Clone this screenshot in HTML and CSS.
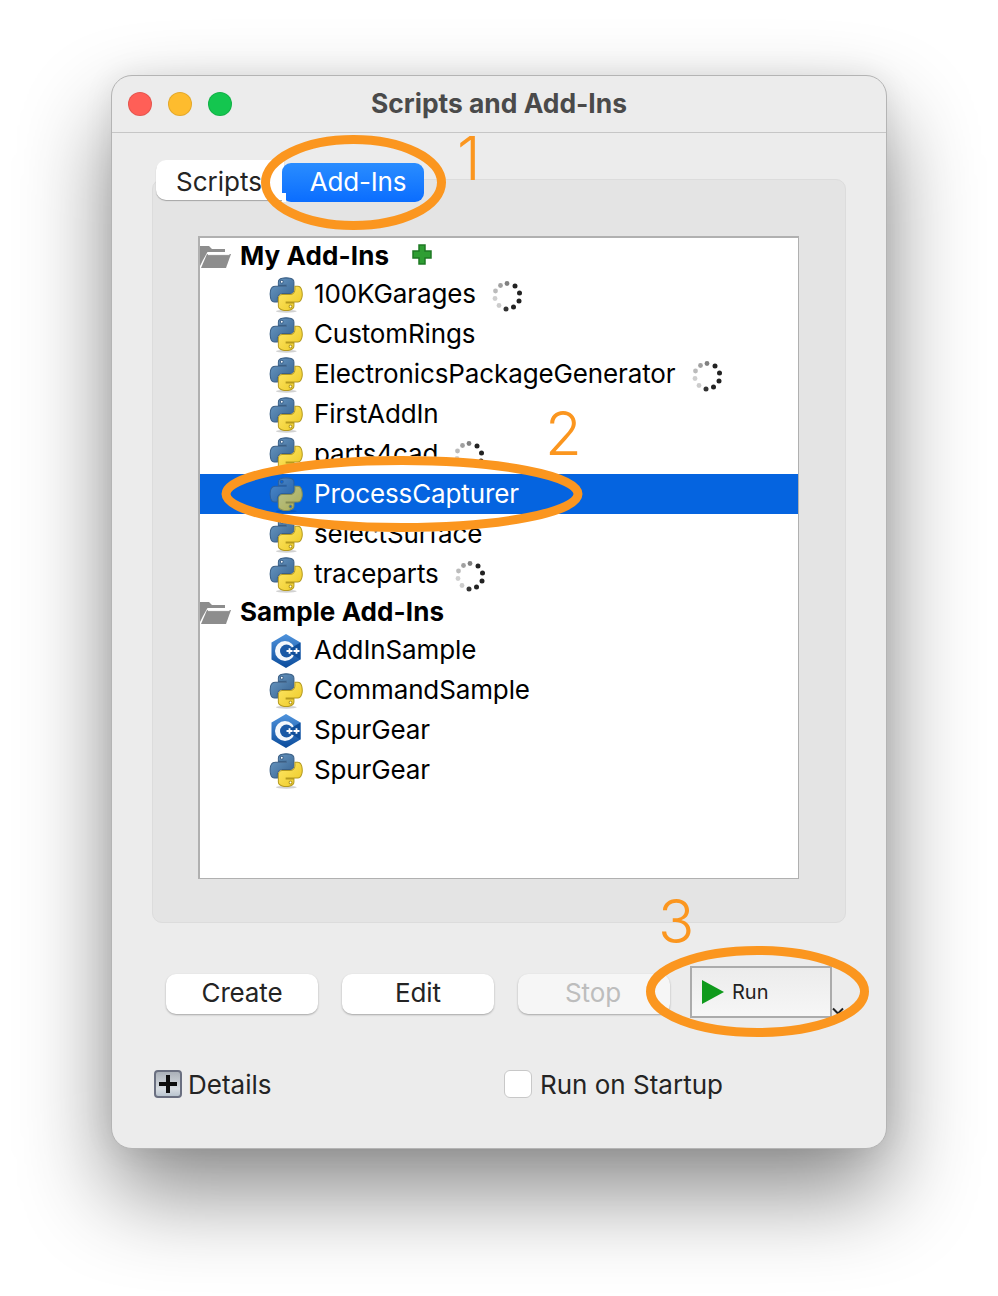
FILE: index.html
```html
<!DOCTYPE html>
<html lang="en">
<head>
<meta charset="utf-8">
<title>Scripts and Add-Ins</title>
<link rel="stylesheet" href="styles.css">
</head>
<body>
<svg class="defs" width="0" height="0" aria-hidden="true">
  <defs>
    <linearGradient id="pyBlue" x1="0" y1="0" x2="1" y2="1"><stop offset="0" stop-color="#6d9cc6"/><stop offset="1" stop-color="#35618f"/></linearGradient>
    <linearGradient id="pyYellow" x1="0" y1="0" x2="1" y2="1"><stop offset="0" stop-color="#ffe86a"/><stop offset="1" stop-color="#ecc822"/></linearGradient>
    <linearGradient id="cppBlue" x1="0" y1="0" x2="0" y2="1"><stop offset="0" stop-color="#4f93dc"/><stop offset="1" stop-color="#0b4c9c"/></linearGradient>
    <symbol id="py" viewBox="-3 -3 116 124">
      <ellipse cx="56" cy="115" rx="36" ry="5" fill="#000" opacity=".18"/>
      <path fill="url(#pyBlue)" stroke="#3a5f86" stroke-width="3.500" d="M54.919 0c-4.584.022-8.961.413-12.813 1.095C30.76 3.099 28.7 7.295 28.7 15.032V25.25h26.812v3.406H18.638c-7.792 0-14.616 4.684-16.75 13.594-2.462 10.213-2.571 16.586 0 27.25 1.906 7.938 6.458 13.594 14.25 13.594h9.219v-12.25c0-8.85 7.657-16.656 16.75-16.656h26.781c7.455 0 13.406-6.138 13.406-13.625V15.032c0-7.266-6.13-12.725-13.406-13.937C64.282.328 59.502-.02 54.919 0zM40.419 8.22c2.77 0 5.031 2.299 5.031 5.125 0 2.816-2.262 5.094-5.031 5.094-2.78 0-5.031-2.278-5.031-5.094 0-2.826 2.252-5.125 5.031-5.125z"/>
      <path fill="url(#pyYellow)" stroke="#b59a1f" stroke-width="3.500" d="M85.638 28.657v11.906c0 9.231-7.826 17-16.75 17H42.106c-7.336 0-13.406 6.278-13.406 13.625v25.531c0 7.266 6.319 11.54 13.406 13.625 8.487 2.496 16.626 2.947 26.781 0 6.75-1.954 13.406-5.888 13.406-13.625V86.501H55.512v-3.406H95.7c7.792 0 10.696-5.435 13.406-13.594 2.799-8.399 2.68-16.476 0-27.25-1.926-7.757-5.604-13.594-13.406-13.594zM70.575 93.313c2.78 0 5.031 2.278 5.031 5.094 0 2.826-2.252 5.125-5.031 5.125-2.77 0-5.031-2.299-5.031-5.125 0-2.816 2.262-5.094 5.031-5.094z"/>
    </symbol>
    <symbol id="cpp" viewBox="-2 -1 34 36">
      <polygon points="15,0 29.500,8.500 29.500,25.500 15,34 0.500,25.500 0.500,8.500" fill="url(#cppBlue)"/>
      <circle cx="14" cy="17" r="10" fill="#f4f8fc"/>
      <circle cx="15.500" cy="17" r="6.500" fill="#1b5aa6"/>
      <polygon points="15,17 29.500,8.500 29.500,25.500" fill="#0f4f9c"/>
      <path d="M15.500 17h6M18.500 14.300v5.400M22.500 17h6M25.500 14.300v5.400" stroke="#fff" stroke-width="1.800" fill="none"/>
    </symbol>
    <symbol id="folder" viewBox="0 0 32 23">
      <path fill="#8d8d8d" d="M1 1h9l3 3h13v3H8.500L4 15 1 21z"/>
      <path fill="#8d8d8d" d="M8 9h24l-5 14H2z"/>
      <path fill="none" stroke="#fff" stroke-width="1" d="M8.800 9.600h21.700"/>
    </symbol>
    <symbol id="spin" viewBox="0 0 32 32">
      <circle cx="16" cy="3.500" r="2.400" fill="#555" opacity=".75"/>
      <circle cx="24" cy="6" r="2.500" fill="#222"/>
      <circle cx="28.500" cy="13" r="2.500" fill="#222"/>
      <circle cx="28" cy="21" r="2.500" fill="#222"/>
      <circle cx="22.500" cy="27" r="2.500" fill="#222"/>
      <circle cx="15" cy="29" r="2.500" fill="#333"/>
      <circle cx="8" cy="25.500" r="2.400" fill="#aaa" opacity=".6"/>
      <circle cx="4" cy="18.500" r="2.400" fill="#bbb" opacity=".7"/>
      <circle cx="4.500" cy="11" r="2.400" fill="#aaa" opacity=".8"/>
      <circle cx="9.500" cy="5.500" r="2.400" fill="#888" opacity=".8"/>
    </symbol>
  </defs>
</svg>

<main class="window">
  <header class="titlebar">
    <div class="lights">
      <span class="light light-red"></span>
      <span class="light light-yellow"></span>
      <span class="light light-green"></span>
    </div>
    <h1 class="title">Scripts and Add-Ins</h1>
    <div></div>
  </header>

  <div class="content">
    <div class="tabs">
      <div class="tab tab-plain">Scripts</div>
      <div class="tab tab-active">Add-Ins</div>
    </div>

    <section class="panel">
      <div class="tree">
        <div class="sel-halo"></div>
        <div class="group"><svg class="ic-folder"><use href="#folder"/></svg><span>My Add-Ins</span>
          <svg class="ic-add" viewBox="0 0 20 21"><path d="M7 1h6v6h6v7h-6v6H7v-6H1V7h6z" fill="#2f9e33" stroke="#1f7a25" stroke-width="1.500"/></svg>
        </div>
        <div class="row"><svg class="ic"><use href="#py"/></svg><span>100KGarages</span><svg class="spin"><use href="#spin"/></svg></div>
        <div class="row"><svg class="ic"><use href="#py"/></svg><span>CustomRings</span></div>
        <div class="row"><svg class="ic"><use href="#py"/></svg><span>ElectronicsPackageGenerator</span><svg class="spin"><use href="#spin"/></svg></div>
        <div class="row"><svg class="ic"><use href="#py"/></svg><span>FirstAddIn</span></div>
        <div class="row"><svg class="ic"><use href="#py"/></svg><span>parts4cad</span><svg class="spin"><use href="#spin"/></svg></div>
        <div class="row row-selected"><svg class="ic"><use href="#py"/></svg><span>ProcessCapturer</span></div>
        <div class="row"><svg class="ic"><use href="#py"/></svg><span>selectSurface</span></div>
        <div class="row"><svg class="ic"><use href="#py"/></svg><span>traceparts</span><svg class="spin"><use href="#spin"/></svg></div>
        <div class="group"><svg class="ic-folder"><use href="#folder"/></svg><span>Sample Add-Ins</span></div>
        <div class="row"><svg class="ic"><use href="#cpp"/></svg><span>AddInSample</span></div>
        <div class="row"><svg class="ic"><use href="#py"/></svg><span>CommandSample</span></div>
        <div class="row"><svg class="ic"><use href="#cpp"/></svg><span>SpurGear</span></div>
        <div class="row"><svg class="ic"><use href="#py"/></svg><span>SpurGear</span></div>
      </div>
    </section>

    <div class="actions">
      <button class="btn">Create</button>
      <button class="btn">Edit</button>
      <button class="btn btn-disabled">Stop</button>
      <button class="run"><svg class="run-ic" viewBox="0 0 24 26"><polygon points="1,1 23,13 1,25" fill="#0f9a1c"/></svg>Run</button>
      <svg class="chev" viewBox="0 0 12 8"><path d="M1 1.500l5 5 5-5" fill="none" stroke="#222" stroke-width="2"/></svg>
    </div>

    <div class="footer">
      <div class="details">
        <span class="plusbox"><svg viewBox="0 0 18 18" width="18" height="18"><path d="M7 0h4v7h7v4h-7v7H7v-7H0V7h7z" fill="#0d0d0d"/></svg></span>
        <span>Details</span>
      </div>
      <label class="startup"><span class="check"></span><span>Run on Startup</span></label>
    </div>
  </div>
</main>

<svg class="marks" viewBox="0 0 998 1296" aria-hidden="true">
  <ellipse cx="353.500" cy="182.500" rx="88" ry="43" />
  <ellipse cx="402" cy="494" rx="176" ry="33.500" />
  <ellipse cx="757.500" cy="991.500" rx="107" ry="41" />
</svg>
<div class="num num-1">1</div>
<div class="num num-2">2</div>
<div class="num num-3">3</div>
</body>
</html>
```
FILE: styles.css
```css
* { box-sizing: border-box; }
html, body { margin: 0; background: #fff; }
body {
  position: relative;
  width: 998px;
  height: 1296px;
  padding: 75px 0 0 111px;
  overflow: hidden;
  font-family: Inter, "Liberation Sans", sans-serif;
  font-size: 26px;
  color: #242424;
}
.defs { position: absolute; }

.window {
  width: 776px;
  height: 1074px;
  background: #ececec;
  border: 1px solid #b4b4b4;
  border-radius: 21px;
  box-shadow: 0 44px 90px rgba(0, 0, 0, .46), 0 0 30px rgba(0, 0, 0, .08);
  display: flex;
  flex-direction: column;
}
.titlebar {
  height: 57px;
  flex: none;
  border-bottom: 1px solid #c6c6c6;
  padding: 0 16px;
  display: grid;
  grid-template-columns: 1fr auto 1fr;
  align-items: center;
}
.lights { display: flex; gap: 16px; }
.light { width: 24px; height: 24px; border-radius: 50%; border: 1px solid rgba(0, 0, 0, .1); }
.light-red { background: #ff5f57; }
.light-yellow { background: #febc2e; }
.light-green { background: #14c64f; }
.title { margin: 0 0 2px; font-size: 26.4px; font-weight: 700; color: #4a4a4a; }

.content { padding: 27px 40px 0; display: flex; flex-direction: column; }

.tabs {
  position: relative;
  z-index: 1;
  height: 42px;
  margin: 0 0 -23px 4px;
  display: flex;
  align-items: flex-start;
}
.tab { display: flex; align-items: center; justify-content: center; }
.tab-plain {
  width: 128px;
  height: 40px;
  padding: 2px 2px 0 0;
  background: #fff;
  border-radius: 10px 0 0 10px;
  box-shadow: 0 1px 1px rgba(0, 0, 0, .28);
}
.tab-active {
  position: relative;
  width: 142px;
  height: 39px;
  margin: 3px 0 0 -2px;
  padding: 0 0 2px 10px;
  color: #fff;
  letter-spacing: -.2px;
  background: linear-gradient(#2a8dff, #0a6dff);
  border-radius: 9px;
}
.tab-active::after {
  content: "";
  position: absolute;
  left: 0;
  bottom: 0;
  width: 4px;
  height: 9px;
  background: #fff;
}

.panel {
  height: 744px;
  flex: none;
  padding: 56px 0 0 45px;
  background: #e4e4e4;
  border: 1px solid #dcdcdc;
  border-radius: 10px;
}
.tree {
  position: relative;
  width: 601px;
  height: 643px;
  background: #fff;
  border: 1px solid #b0b0b0;
  border-width: 2px 1px 1px 2px;
  color: #000;
}
.sel-halo {
  position: absolute;
  left: 21px;
  top: 218px;
  width: 362px;
  height: 76px;
  border-radius: 50%;
  background: #fff;
  z-index: 1;
}
.group {
  height: 36px;
  display: flex;
  align-items: center;
  font-weight: 700;
  letter-spacing: .1px;
}
.group > span { margin-bottom: 2px; }
.ic-folder { width: 32px; height: 23px; margin: 0 9px 0 -1px; flex: none; }
.ic-add { width: 20px; height: 21px; margin: -3px 0 0 23px; }
.row {
  height: 40px;
  display: flex;
  align-items: center;
  padding-left: 70px;
  letter-spacing: -.12px;
}
.row > span { margin-bottom: 2px; }
.row-selected {
  position: relative;
  z-index: 2;
  background: #0564e0;
  color: #fff;
}
.row-selected .ic { opacity: .72; }
.ic { width: 34px; height: 36px; margin: 1px 11px 0 -1px; flex: none; }
.spin { width: 32px; height: 32px; margin: 4px 0 0 15px; flex: none; }

.actions {
  height: 40px;
  margin-top: 51px;
  padding-left: 14px;
  display: flex;
  align-items: flex-start;
  gap: 24px;
}
.btn {
  width: 152px;
  height: 40px;
  padding: 0 0 3px;
  border: 0;
  border-radius: 10px;
  background: #fff;
  color: #242424;
  font: inherit;
  letter-spacing: -.15px;
  box-shadow: 0 1px 2px rgba(0, 0, 0, .3);
}
.btn-disabled { background: #f6f6f6; color: #bdbdbd; padding-right: 2px; }
.run {
  width: 142px;
  height: 52px;
  margin: -8px 0 0 -4px;
  padding: 0 0 0 9px;
  display: flex;
  align-items: center;
  gap: 7px;
  border: 2px solid #ababab;
  background: linear-gradient(#ececec, #f6f6f6);
  color: #222;
  font: 20px Inter, "Liberation Sans", sans-serif;
}
.run-ic { width: 24px; height: 26px; flex: none; }
.chev { width: 12px; height: 8px; margin: 33px 0 0 -24px; flex: none; }

.footer {
  margin-top: 56px;
  padding-left: 2px;
  height: 28px;
  display: flex;
  align-items: center;
}
.details { width: 350px; display: flex; align-items: center; gap: 6px; }
.plusbox {
  width: 28px;
  height: 28px;
  display: flex;
  align-items: center;
  justify-content: center;
  border: 2px solid #6a6f80;
  border-radius: 4px;
  background: linear-gradient(#aab0b8, #d8dde2 70%, #b9c4cf);
}
.startup { display: flex; align-items: center; gap: 8px; }
.check {
  width: 28px;
  height: 28px;
  background: #fff;
  border: 1px solid #c8c8c8;
  border-radius: 6px;
}

.marks {
  position: absolute;
  left: 0;
  top: 0;
  width: 998px;
  height: 1296px;
  z-index: 3;
  pointer-events: none;
}
.marks ellipse { fill: none; stroke: #fb961f; stroke-width: 9; }
.num {
  position: absolute;
  z-index: 3;
  color: #fb961f;
  font-size: 60px;
  font-weight: 300;
  line-height: 60px;
}
.num-1 { left: 457px; top: 128px; }
.num-2 { left: 545px; top: 403px; }
.num-3 { left: 658px; top: 891px; }
```
